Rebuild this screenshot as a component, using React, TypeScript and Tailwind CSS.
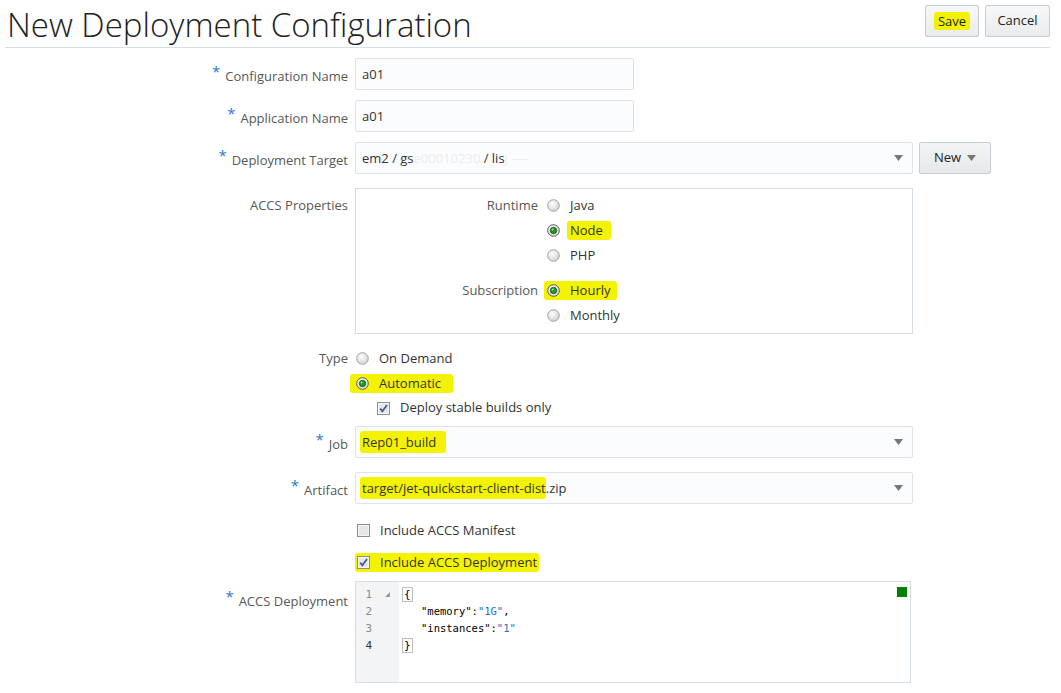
import React from "react";

const hl = "bg-[#f3f300] rounded-[3px]";

function Star() {
  return <span className="text-[#2a7ad0] text-[15px] relative -top-[4px] mr-[5px]">*</span>;
}

function Radio({ checked }: { checked?: boolean }) {
  return (
    <svg width="13" height="13" viewBox="0 0 13 13" className="shrink-0">
      <defs>
        <radialGradient id={checked ? "rg1" : "rg0"} cx="40%" cy="35%" r="70%">
          <stop offset="0%" stopColor="#ffffff" />
          <stop offset="100%" stopColor={checked ? "#d8d8d8" : "#cfcfcf"} />
        </radialGradient>
      </defs>
      <circle cx="6.5" cy="6.5" r="5.8" fill={`url(#${checked ? "rg1" : "rg0"})`} stroke={checked ? "#5a5a5a" : "#a3a3a3"} strokeWidth="1" />
      {checked && <circle cx="6.5" cy="6.5" r="3.2" fill="#1f9a1f" stroke="#214d21" strokeWidth="0.8" />}
      {checked && <circle cx="5.6" cy="5.6" r="1" fill="#9be09b" />}
    </svg>
  );
}

function Check({ checked }: { checked?: boolean }) {
  return (
    <svg width="13" height="13" viewBox="0 0 13 13" className="shrink-0">
      <rect x="0.5" y="0.5" width="12" height="12" fill="#f4f4f4" stroke="#8e8f8f" />
      <rect x="2" y="2" width="9" height="9" fill="#e6e6e6" />
      {checked && <path d="M3.2 6.6 L5.4 9.3 L10 3" fill="none" stroke="#3f5c9e" strokeWidth="1.8" />}
    </svg>
  );
}

function Caret() {
  return (
    <svg width="9" height="6" viewBox="0 0 9 6">
      <path d="M0 0 H9 L4.5 6 Z" fill="#777" />
    </svg>
  );
}

function Label({ req, children, className = "" }: { req?: boolean; children: React.ReactNode; className?: string }) {
  return (
    <div className={`w-[348px] shrink-0 text-right text-[#585858] text-[13px] ${className}`}>
      {req && <Star />}
      {children}
    </div>
  );
}

function Input({ value, w = "w-[279px]" }: { value: React.ReactNode; w?: string }) {
  return (
    <div className={`${w} h-[32px] border border-[#dde3e8] rounded-[2px] bg-[#fbfcfd] flex items-center pt-[2px] px-[6px] text-[13px] text-[#333]`}>
      {value}
    </div>
  );
}

function Select({ value }: { value: React.ReactNode }) {
  return (
    <div className="w-[558px] h-[32px] border border-[#dde3e8] rounded-[2px] bg-[#fbfcfd] flex items-center justify-between pl-[6px] pr-[9px] text-[13px] text-[#333]">
      <span className="pt-[2px]">{value}</span>
      <Caret />
    </div>
  );
}

function RadioRow({ label, checked, highlight }: { label: string; checked?: boolean; highlight?: string }) {
  return (
    <div className="h-[25px] flex items-center">
      <span className={`flex items-center ${highlight ?? ""}`}>
        <Radio checked={checked} />
        <span className="ml-[10px] text-[13px] text-[#333]">{label}</span>
      </span>
    </div>
  );
}

export default function App() {
  return (
    <div className="w-[1061px] h-[693px] bg-white overflow-hidden font-['Open_Sans',sans-serif]">
      <header className="ml-[5px] mr-[11px] h-[48px] border-b border-[#d6dee6] flex items-start justify-between">
        <h1 className="ml-[2px] mt-[5px] text-[33px] leading-[40px] text-[#222] font-light">New Deployment Configuration</h1>
        <div className="flex gap-[6px] mt-[5px]">
          <button className="w-[54px] h-[32px] border border-[#c6cdd4] rounded-[2px] bg-gradient-to-b from-[#f7f8f9] to-[#e9ebed] text-[13px] text-[#222] flex items-center justify-center">
            <span className={`${hl} px-[4px] leading-[18px]`}>Save</span>
          </button>
          <button className="w-[65px] h-[32px] border border-[#c6cdd4] rounded-[2px] bg-gradient-to-b from-[#f7f8f9] to-[#e9ebed] text-[13px] text-[#222]">
            Cancel
          </button>
        </div>
      </header>

      <div className="flex flex-col">
        <div className="flex items-center mt-[10px] gap-[7px]">
          <Label req className="pt-[2px]">Configuration Name</Label>
          <Input value="a01" />
        </div>
        <div className="flex items-center mt-[10px] gap-[7px]">
          <Label req className="pt-[2px]">Application Name</Label>
          <Input value="a01" />
        </div>
        <div className="flex items-center mt-[10px] gap-[7px]">
          <Label req className="pt-[2px]">Deployment Target</Label>
          <Select
            value={
              <>
                em2 / gs<span className="text-[#ececec]">e00010230</span> / lis<span className="text-[#ececec]">j ---- </span>
              </>
            }
          />
          <button className="ml-[-1px] w-[72px] h-[32px] border border-[#c6cdd4] rounded-[2px] bg-gradient-to-b from-[#f3f4f5] to-[#e6e8ea] text-[13px] text-[#222] flex items-center justify-center gap-[6px]">
            New <Caret />
          </button>
        </div>

        <div className="flex items-start mt-[14px] gap-[7px]">
          <Label className="pt-[8px]">ACCS Properties</Label>
          <div className="w-[558px] h-[146px] border border-[#d6dde4] pt-[4px]">
            <div className="flex">
              <div className="w-[182px] text-right text-[13px] text-[#585858] leading-[25px]">Runtime</div>
              <div className="ml-[9px] flex flex-col">
                <RadioRow label="Java" />
                <div className="h-[25px] flex items-center">
                  <span className="flex items-center">
                    <Radio checked />
                    <span className={`ml-[7px] pl-[3px] pr-[8px] text-[13px] text-[#333] ${hl}`}>Node</span>
                  </span>
                </div>
                <RadioRow label="PHP" />
              </div>
            </div>
            <div className="flex mt-[10px]">
              <div className="w-[182px] text-right text-[13px] text-[#585858] leading-[25px]">Subscription</div>
              <div className="ml-[9px] flex flex-col">
                <RadioRow label="Hourly" checked highlight={`${hl} pr-[6px] -ml-[3px] pl-[3px]`} />
                <RadioRow label="Monthly" />
              </div>
            </div>
          </div>
        </div>

        <div className="flex items-start mt-[12px] gap-[7px]">
          <Label className="leading-[25px]">Type</Label>
          <div className="flex flex-col pl-[1px]">
            <RadioRow label="On Demand" />
            <RadioRow label="Automatic" checked highlight={`${hl} -ml-[6px] pl-[6px] pr-[12px]`} />
            <div className="h-[24px] flex items-center pl-[21px]">
              <Check checked />
              <span className="ml-[10px] text-[13px] text-[#333]">Deploy stable builds only</span>
            </div>
          </div>
        </div>

        <div className="flex items-center mt-[6px] gap-[7px]">
          <Label req className="pt-[2px]">Job</Label>
          <Select value={<span className={`${hl} -ml-[2px] pl-[2px] pr-[10px] py-[2px]`}>Rep01_build</span>} />
        </div>
        <div className="flex items-center mt-[14px] gap-[7px]">
          <Label req className="pt-[2px]">Artifact</Label>
          <Select
            value={
              <>
                <span className={`${hl} -ml-[2px] pl-[2px] py-[2px]`}>target/jet-quickstart-client-dist</span>.zip
              </>
            }
          />
        </div>

        <div className="flex items-center mt-[14px] gap-[7px] h-[25px]">
          <div className="w-[348px]" />
          <div className="flex items-center pl-[2px]">
            <Check />
            <span className="ml-[10px] text-[13px] text-[#333]">Include ACCS Manifest</span>
          </div>
        </div>
        <div className="flex items-center mt-[7px] gap-[7px] h-[25px]">
          <div className="w-[348px]" />
          <div className={`flex items-center pl-[2px] pr-[2px] ${hl}`}>
            <Check checked />
            <span className="ml-[10px] text-[13px] text-[#333]">Include ACCS Deployment</span>
          </div>
        </div>

        <div className="flex items-start mt-[6px] gap-[7px]">
          <Label req className="pt-[8px]">ACCS Deployment</Label>
          <div className="w-[556px] h-[102px] border border-[#d6dde4] flex relative font-['DejaVu_Sans_Mono',monospace] text-[10px] leading-[17px]">
            <div className="w-[43px] bg-[#f2f4f6] pt-[4px] text-[#8a8a8a] shrink-0 text-[11px]">
              {["1", "2", "3", "4"].map((n, i) => (
                <div key={n} className="flex items-center h-[17px]">
                  <span className={`w-[16px] text-right ${i === 3 ? "text-[#333]" : ""}`}>{n}</span>
                  {i === 0 && (
                    <svg width="5" height="5" viewBox="0 0 5 5" className="ml-[13px]">
                      <path d="M5 0 V5 H0 Z" fill="#999" />
                    </svg>
                  )}
                </div>
              ))}
            </div>
            <div className="pt-[4px] pl-[3px] text-[#000] text-[11px]">
              <div className="h-[17px]"><span className="border border-[#bdbdbd] px-[1px]">{"{"}</span></div>
              <div className="h-[17px] pl-[19px] text-[10.5px]">"memory":<span className="text-[#1d6fc2]">"1G"</span>,</div>
              <div className="h-[17px] pl-[19px] text-[10.5px]">"instances":<span className="text-[#1d6fc2]">"1"</span></div>
              <div className="h-[17px]"><span className="border border-[#bdbdbd] px-[1px]">{"}"}</span></div>
            </div>
            <div className="absolute top-[5px] right-[3px] w-[10px] h-[10px] bg-[#008000]" />
          </div>
        </div>
      </div>
    </div>
  );
}
